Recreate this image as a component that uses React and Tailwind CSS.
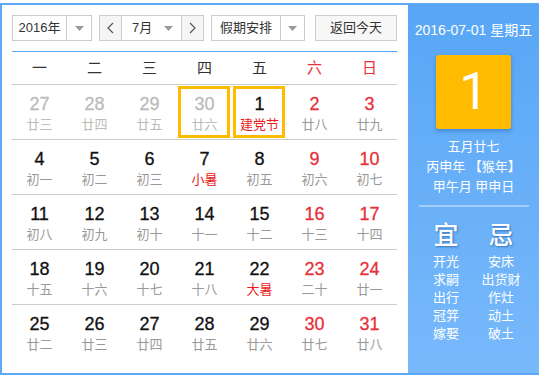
import React from "react";

const weekDays = ["一", "二", "三", "四", "五", "六", "日"];

// [day, lunar, kind]  kind: p = other month, w = weekend, h = festival text red
const weeks = [
  [["27", "廿三", "p"], ["28", "廿四", "p"], ["29", "廿五", "p"], ["30", "廿六", "p", "sel"], ["1", "建党节", "h", "sel"], ["2", "廿八", "w"], ["3", "廿九", "w"]],
  [["4", "初一"], ["5", "初二"], ["6", "初三"], ["7", "小暑", "h"], ["8", "初五"], ["9", "初六", "w"], ["10", "初七", "w"]],
  [["11", "初八"], ["12", "初九"], ["13", "初十"], ["14", "十一"], ["15", "十二"], ["16", "十三", "w"], ["17", "十四", "w"]],
  [["18", "十五"], ["19", "十六"], ["20", "十七"], ["21", "十八"], ["22", "大暑", "h"], ["23", "二十", "w"], ["24", "廿一", "w"]],
  [["25", "廿二"], ["26", "廿三"], ["27", "廿四"], ["28", "廿五"], ["29", "廿六"], ["30", "廿七", "w"], ["31", "廿八", "w"]],
];

const yi = ["开光", "求嗣", "出行", "冠笄", "嫁娶"];
const ji = ["安床", "出货财", "作灶", "动土", "破土"];

function Caret() {
  return (
    <svg width="9" height="5" viewBox="0 0 9 5">
      <path d="M0 0h9L4.5 5z" fill="#999" />
    </svg>
  );
}

function Chevron({ dir }) {
  return (
    <svg width="7" height="12" viewBox="0 0 7 12">
      <path d={dir === "l" ? "M6 1L1 6l5 5" : "M1 1l5 5-5 5"} fill="none" stroke="#555" strokeWidth="1.2" />
    </svg>
  );
}

function DayCell({ cell }) {
  const [day, lunar, kind, sel] = cell;
  const numColor = kind === "p" ? "text-[#bbbbbb]" : kind === "w" ? "text-[#e8303a]" : "text-[#111]";
  const lunarColor = kind === "p" ? "text-[#bbbbbb]" : kind === "h" ? "text-[#e81c1c]" : "text-[#999]";
  return (
    <div className="relative flex flex-col items-center pt-[9px] h-[54px]">
      {sel && <div className="absolute left-px top-px right-[2px] bottom-px border-[3px] border-[#ffbb00]" />}
      <div className={`text-[18px] leading-[20px] [-webkit-text-stroke:0.3px_currentColor] ${numColor}`}>{day}</div>
      <div className={`mt-[3px] text-[13px] leading-[16px] ${lunarColor}`}>{lunar}</div>
    </div>
  );
}

export default function App() {
  return (
    <div className="pt-[3px] bg-white" style={{ fontFamily: '"Liberation Sans", "Noto Sans CJK SC", sans-serif' }}>
      <div className="flex h-[372px] border-l-2 border-t-2 border-b-2 border-[#5ea9f5] overflow-hidden">
        {/* LEFT: calendar */}
        <div className="w-[406px] pl-[10px] pr-[11px] pt-[10px] bg-white">
          <div className="flex items-center h-[26px] text-[13px] text-[#333]">
            <div className="flex h-[26px] w-[80px] border border-[#ccc]">
              <div className="w-[54px] flex items-center justify-center border-r border-[#ccc]">2016年</div>
              <div className="flex-1 flex items-center justify-center"><Caret /></div>
            </div>
            <div className="flex h-[26px] w-[105px] ml-[7px] border border-[#ccc]">
              <div className="w-[22px] flex items-center justify-center bg-[#f5f5f5] border-r border-[#ccc]"><Chevron dir="l" /></div>
              <div className="flex-1 flex items-center pl-[10px] pr-[8px] justify-between">
                <span>7月</span>
                <Caret />
              </div>
              <div className="w-[22px] flex items-center justify-center bg-[#f5f5f5] border-l border-[#ccc]"><Chevron dir="r" /></div>
            </div>
            <div className="flex h-[26px] w-[94px] ml-[7px] border border-[#ccc]">
              <div className="w-[69px] flex items-center justify-center border-r border-[#ccc]">假期安排</div>
              <div className="flex-1 flex items-center justify-center"><Caret /></div>
            </div>
            <div className="h-[26px] w-[82px] ml-[10px] border border-[#ccc] bg-[#f7f7f7] flex items-center justify-center">返回今天</div>
          </div>
          <div className="mt-[10px] h-px bg-[#5aa5f0]" />
          <div className="grid grid-cols-7 h-[33px] items-center text-[15px] border-b border-[#ccc]">
            {weekDays.map((d, i) => (
              <div key={d} className={`text-center ${i >= 5 ? "text-[#e8303a]" : "text-[#333]"}`}>{d}</div>
            ))}
          </div>
          {weeks.map((w, i) => (
            <div key={i} className={`grid grid-cols-7 ${i < weeks.length - 1 ? "border-b border-[#ccc]" : ""}`}>
              {w.map((c, j) => <DayCell key={j} cell={c} />)}
            </div>
          ))}
        </div>

        {/* RIGHT: today panel */}
        <div className="flex-1 flex flex-col items-center bg-gradient-to-b from-[#58a6f6] to-[#78b9fb] text-white">
          <div className="mt-[16px] text-[14px] leading-[18px]">2016-07-01 星期五</div>
          <div className="mt-[16px] w-[75px] h-[74px] rounded-[3px] bg-[#ffbb00] shadow-[0_2px_4px_rgba(0,60,140,0.35)] flex items-center justify-center text-[52px] leading-none font-normal" style={{ fontFamily: 'Roboto, "Liberation Sans", sans-serif' }}>1</div>
          <div className="mt-[8px] text-[13px] leading-[20px] text-center">
            <div>五月廿七</div>
            <div>丙申年 【猴年】</div>
            <div>甲午月 甲申日</div>
          </div>
          <div className="mt-[8px] w-[110px] h-[2px] bg-white/40" />
          <div className="mt-[13px] flex w-[110px] justify-between">
            <div className="w-[56px] flex flex-col items-center">
              <div className="text-[25px] leading-[30px] font-medium [text-shadow:1px_1px_2px_rgba(0,50,120,0.5)]">宜</div>
              <div className="mt-[3px] text-[13px] leading-[18px] text-center">
                {yi.map((t) => <div key={t}>{t}</div>)}
              </div>
            </div>
            <div className="w-[56px] flex flex-col items-center">
              <div className="text-[25px] leading-[30px] font-medium [text-shadow:1px_1px_2px_rgba(0,50,120,0.5)]">忌</div>
              <div className="mt-[3px] text-[13px] leading-[18px] text-center">
                {ji.map((t) => <div key={t}>{t}</div>)}
              </div>
            </div>
          </div>
        </div>
      </div>
    </div>
  );
}
